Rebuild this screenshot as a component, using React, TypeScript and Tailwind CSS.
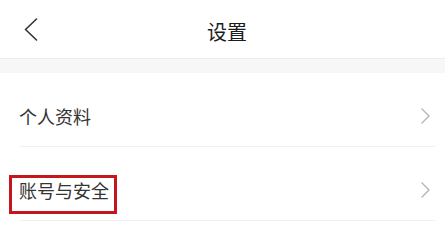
import React from "react";

function ChevronRight() {
  return (
    <svg width="9" height="16" viewBox="0 0 9 16" fill="none">
      <path d="M1 1 L8 8 L1 15" stroke="#b4b4b4" strokeWidth="1.4" strokeLinecap="round" strokeLinejoin="round" />
    </svg>
  );
}

export default function App() {
  return (
    <div
      className="w-[445px] h-[230px] bg-white overflow-hidden"
      style={{ fontFamily: '"Noto Sans CJK SC", "Noto Sans", sans-serif' }}
    >
      <header className="h-[58px] flex items-center pl-[24px] pr-[24px]">
        <svg width="14" height="23" viewBox="0 0 14 23" fill="none" className="mt-[1px]">
          <path d="M12.5 1 L1.5 11.5 L12.5 22" stroke="#333333" strokeWidth="1.6" strokeLinecap="round" strokeLinejoin="round" />
        </svg>
        <div className="flex-1 text-center pr-[5px] pt-[6px] text-[20px] leading-[26px] text-[#1c1c1c]">设置</div>
      </header>
      <div className="h-[15px] border-t border-[#ececec] bg-[#f7f7f7]" />
      <div className="ml-[19px] mr-[10px]">
        <div className="h-[74px] pt-[12px] flex items-center justify-between border-b border-[#f1f1f1]">
          <span className="text-[18px] leading-[24px] text-[#333333]">个人资料</span>
          <span className="pr-[5px] flex items-center"><ChevronRight /></span>
        </div>
        <div className="h-[74px] pt-[12px] flex items-center justify-between border-b border-[#f1f1f1]">
          <span className="-ml-[10px] -mt-[3px] -mb-[12px] border-[3px] border-[#c4161c] pl-[7px] pr-[5px] pb-[9px] text-[18px] leading-[24px] text-[#333333]">
            账号与安全
          </span>
          <span className="pr-[5px] flex items-center"><ChevronRight /></span>
        </div>
      </div>
    </div>
  );
}
